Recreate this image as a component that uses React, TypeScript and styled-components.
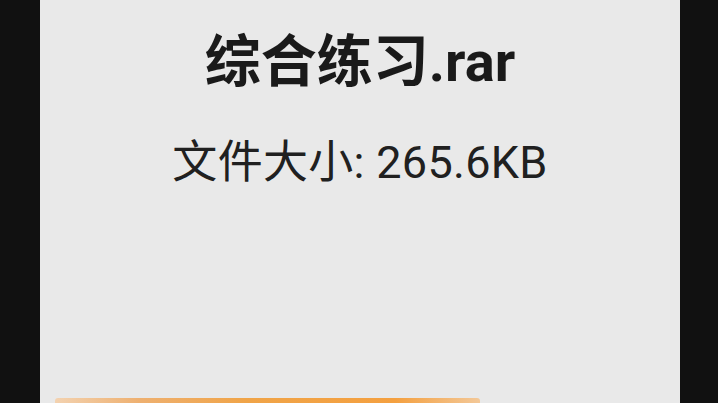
import React from "react";
import styled, { createGlobalStyle } from "styled-components";

const Global = createGlobalStyle`
  html, body { margin: 0; padding: 0; background: #111111; }
  body { font-family: Roboto, "Noto Sans CJK SC", sans-serif; }
`;

const Frame = styled.div`
  width: 718px;
  height: 403px;
  display: flex;
  background: #111111;
  overflow: hidden;
`;

const Panel = styled.main`
  margin-left: 40px;
  width: 640px;
  height: 403px;
  background: #e9e9e9;
  display: flex;
  flex-direction: column;
  align-items: center;
  padding-top: 26px;
  box-sizing: border-box;
`;

const Title = styled.h1`
  margin: 0;
  font-family: Roboto, "Noto Sans CJK SC", sans-serif;
  font-size: 56px;
  line-height: 72px;
  font-weight: 700;
  color: #1a1a1a;
  white-space: nowrap;
`;

const Size = styled.p`
  margin: 35px 0 0;
  font-family: Roboto, "Noto Sans CJK SC", sans-serif;
  font-size: 45px;
  line-height: 60px;
  font-weight: 400;
  color: #202020;
  white-space: nowrap;
  letter-spacing: 0.3px;
`;

const Spacer = styled.div`
  flex: 1;
`;

const ActionBar = styled.div`
  align-self: flex-start;
  margin-left: 15px;
  width: 425px;
  height: 5px;
  border-radius: 3px 3px 0 0;
  background: linear-gradient(
    90deg,
    #f3d2b0 0%,
    #eeb070 20%,
    #f0a448 45%,
    #f4a040 80%,
    #f3c898 100%
  );
`;

export default function App() {
  return (
    <>
      <Global />
      <Frame>
        <Panel>
          <Title>综合练习.rar</Title>
          <Size>文件大小: 265.6KB</Size>
          <Spacer />
          <ActionBar />
        </Panel>
      </Frame>
    </>
  );
}
